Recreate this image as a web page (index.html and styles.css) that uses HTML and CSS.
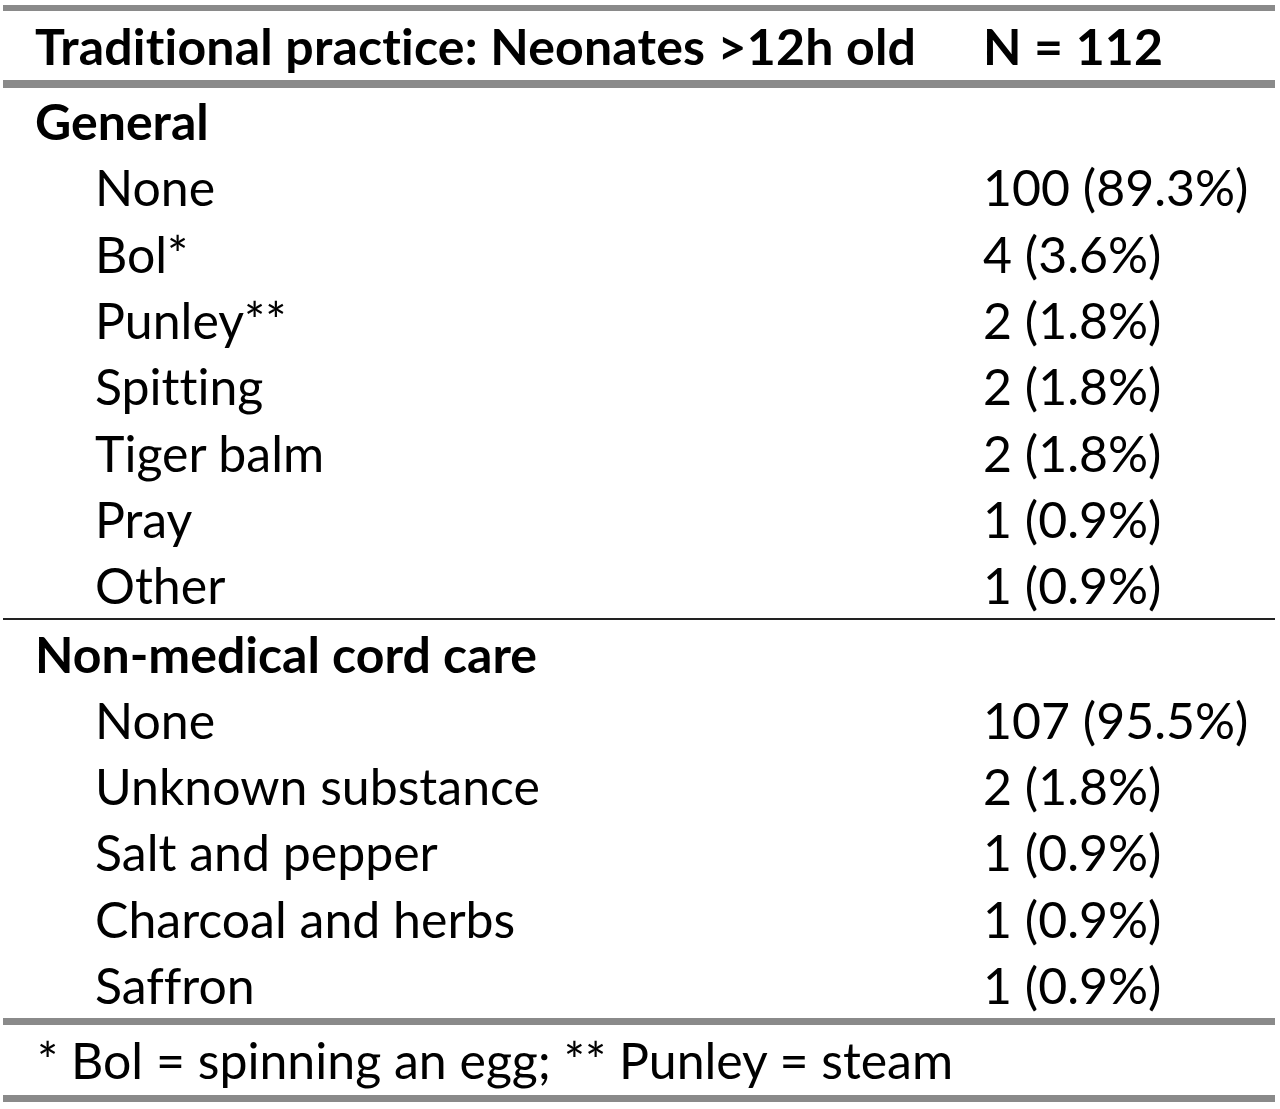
FILE: index.html
```html
<!DOCTYPE html>
<html>
<head>
<meta charset="utf-8">
<link rel="stylesheet" href="styles.css">
</head>
<body>
<div class="tbl">
  <div class="rule r6"></div>
  <div class="row head"><div class="c1">Traditional practice: Neonates &gt;12h old</div><div class="c2">N = 112</div></div>
  <div class="rule r8"></div>
  <div class="grp">
    <div class="row sec"><div class="c1">General</div></div>
    <div class="row"><div class="c1 ind">None</div><div class="c2">100 (89.3%)</div></div>
    <div class="row"><div class="c1 ind">Bol*</div><div class="c2">4 (3.6%)</div></div>
    <div class="row"><div class="c1 ind">Punley**</div><div class="c2">2 (1.8%)</div></div>
    <div class="row"><div class="c1 ind">Spitting</div><div class="c2">2 (1.8%)</div></div>
    <div class="row"><div class="c1 ind">Tiger balm</div><div class="c2">2 (1.8%)</div></div>
    <div class="row"><div class="c1 ind">Pray</div><div class="c2">1 (0.9%)</div></div>
    <div class="row"><div class="c1 ind">Other</div><div class="c2">1 (0.9%)</div></div>
  </div>
  <div class="rule thin"></div>
  <div class="grp">
    <div class="row sec"><div class="c1">Non-medical cord care</div></div>
    <div class="row"><div class="c1 ind">None</div><div class="c2">107 (95.5%)</div></div>
    <div class="row"><div class="c1 ind">Unknown substance</div><div class="c2">2 (1.8%)</div></div>
    <div class="row"><div class="c1 ind">Salt and pepper</div><div class="c2">1 (0.9%)</div></div>
    <div class="row"><div class="c1 ind">Charcoal and herbs</div><div class="c2">1 (0.9%)</div></div>
    <div class="row"><div class="c1 ind">Saffron</div><div class="c2">1 (0.9%)</div></div>
  </div>
  <div class="rule r7"></div>
  <div class="row foot"><div class="fn">* Bol = spinning an egg; ** Punley = steam</div></div>
  <div class="rule r7"></div>
</div>
</body>
</html>
```

FILE: styles.css
```css
html, body {
  margin: 0;
  padding: 0;
  background: #ffffff;
}
.tbl {
  width: 1272px;
  margin: 5px 0 0 3px;
  font-family: Lato, "Open Sans", sans-serif;
  font-size: 50px;
  color: #000;
  line-height: 1;
  font-variant-ligatures: none;
  font-feature-settings: "liga" 0, "clig" 0;
}
.rule {
  background: #8a8a8a;
}
.r6 { height: 6px; }
.r7 { height: 7px; }
.r8 { height: 8px; }
.thin {
  height: 2px;
  background: #222;
}
.row {
  display: grid;
  grid-template-columns: 980px 1fr;
  align-items: center;
  height: 66.3px;
  white-space: nowrap;
}
.head {
  height: 69px;
  font-weight: 700;
  letter-spacing: 0.2px;
}
.c1 {
  padding-left: 32px;
}
.c1.ind {
  padding-left: 92px;
}
.sec {
  font-weight: 700;
}
.foot {
  display: flex;
  height: 70px;
}
.fn {
  padding-left: 34px;
}
```
